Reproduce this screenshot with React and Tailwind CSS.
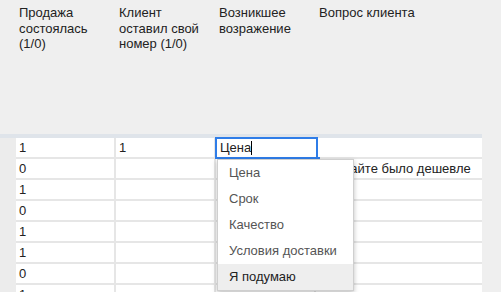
import React from "react";

const rows = [
  ["1", "1", "", ""],
  ["0", "", "", "Сделайте было дешевле"],
  ["1", "", "", ""],
  ["0", "", "", ""],
  ["1", "", "", ""],
  ["1", "", "", ""],
  ["0", "", "", ""],
  ["1", "", "", ""],
];

const headers = [
  ["Продажа", "состоялась", "(1/0)"],
  ["Клиент", "оставил свой", "номер (1/0)"],
  ["Возникшее", "возражение"],
  ["Вопрос клиента"],
];

const options = ["Цена", "Срок", "Качество", "Условия доставки", "Я подумаю"];

export default function App() {
  return (
    <div
      className="relative w-[501px] h-[292px] overflow-hidden bg-[#efefef] text-[13px] text-[#222]"
      style={{ fontFamily: '"Liberation Sans", Arial, sans-serif' }}
    >
      <div className="flex h-[134px] pl-[16px] pt-[5px]">
        {headers.map((h, i) => (
          <div key={i} className={`${i === 3 ? "w-[166px]" : "w-[100px]"} pl-[3px] leading-[15.7px]`}>
            {h.map((l, j) => (
              <div key={j}>{l}</div>
            ))}
          </div>
        ))}
      </div>
      <div className="h-[4px] w-[482px] bg-[#dfe4ea]" />
      <div className="flex">
        <div className="w-[16px] bg-[#ececec]" />
        <div className="flex flex-col w-[466px] bg-white">
          {rows.map((r, i) => (
            <div key={i} className="flex h-[21px] border-b-2 border-[#e6e6e6]">
              {r.map((c, j) => (
                <div
                  key={j}
                  className={`${j === 3 ? "w-[166px]" : "w-[100px] border-r-2 border-[#e6e6e6]"} relative flex items-center pl-[3px] whitespace-nowrap`}
                >
                  {i === 0 && j === 2 ? (
                    <div className="absolute left-[-1px] top-[-1px] w-[103px] h-[22px] border-2 border-[#2f7de8] bg-white flex items-center pl-[3px]">
                      <span>Цена</span>
                      <span className="w-px h-[14px] bg-black" />
                      <div className="absolute right-[-4px] bottom-[-4px] w-[4px] h-[4px] bg-[#2f7de8]" />
                    </div>
                  ) : (
                    c
                  )}
                </div>
              ))}
            </div>
          ))}
        </div>
      </div>
      <div className="absolute left-[217px] top-[159px] w-[137px] bg-white border border-[#cfcfcf] shadow-[0_2px_5px_rgba(0,0,0,0.25)] flex flex-col">
        {options.map((o, i) => (
          <div
            key={o}
            className={`h-[26px] flex items-center pl-[11px] ${i === 4 ? "bg-[#eeeeee] text-[#222]" : "text-[#555]"}`}
          >
            {o}
          </div>
        ))}
      </div>
    </div>
  );
}
